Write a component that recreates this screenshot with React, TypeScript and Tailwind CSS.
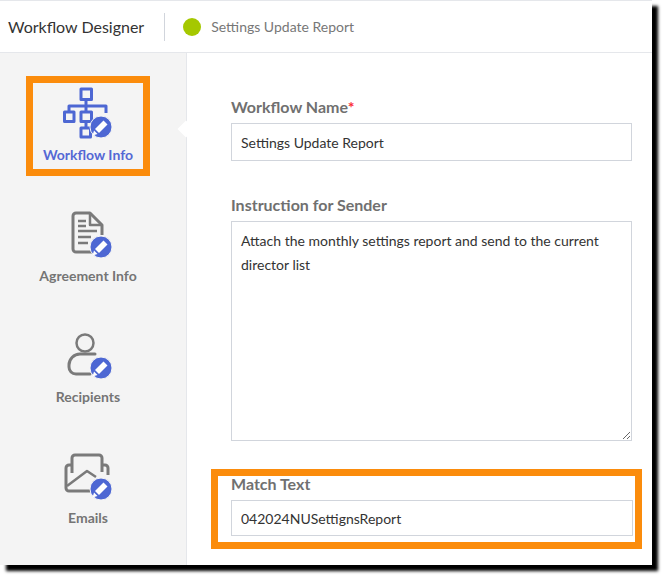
import type { ReactNode } from 'react';

const font = { fontFamily: 'Lato, "Noto Sans", sans-serif' };

function Badge() {
  return (
    <g>
      <circle cx="38" cy="40" r="11" fill="#4d67d3" stroke="#f4f4f4" strokeWidth="1" />
      <path d="M40.5 33.5l4 4-8.5 8.5-4-4z" fill="#fff" />
      <path d="M31 43.5l3.5 3.5-5 1.5z" fill="#fff" />
    </g>
  );
}

function IconFrame({ children }: { children: ReactNode }) {
  return (
    <svg width="50" height="52" viewBox="0 0 50 52" fill="none" strokeWidth="2.5" strokeLinejoin="round">
      {children}
      <Badge />
    </svg>
  );
}

function WorkflowIcon() {
  return (
    <IconFrame>
      <g stroke="#4d67d3" strokeWidth="3">
        <rect x="18" y="2" width="10.5" height="10.5" />
        <rect x="1.5" y="25" width="9.5" height="9.5" />
        <rect x="18" y="25" width="10.5" height="9.5" />
        <rect x="18" y="41" width="9.5" height="9" />
        <path d="M23 12.5V25M6 25v-6h37v7M23 34.5V41" />
      </g>
    </IconFrame>
  );
}

function AgreementIcon() {
  return (
    <IconFrame>
      <g stroke="#7a7a7a">
        <path d="M30 45H13a3 3 0 0 1-3-3V9a3 3 0 0 1 3-3h14l12 12v10" strokeWidth="3" />
        <path d="M27 6v12h12" />
        <path d="M15 14h8M15 19h8M15 24h19M15 30h13M15 36h10" />
      </g>
    </IconFrame>
  );
}

function RecipientsIcon() {
  return (
    <IconFrame>
      <g stroke="#7a7a7a">
        <circle cx="22" cy="15" r="8.5" />
        <path d="M32 26H17c-6 0-11 5-11 11v2c0 4 3 7 7 7h14" strokeWidth="3" strokeLinecap="round" />
      </g>
    </IconFrame>
  );
}

function EmailsIcon() {
  return (
    <IconFrame>
      <g stroke="#7a7a7a">
        <path d="M9 24V9a3 3 0 0 1 3-3h24a3 3 0 0 1 3 3v14" strokeWidth="3" />
        <path d="M9 16H6a3 3 0 0 0-3 3v20a3 3 0 0 0 3 3h21M39 16h3a3 3 0 0 1 3 3v7" strokeWidth="3" />
        <path d="M4 37l20-15 9 6" />
      </g>
    </IconFrame>
  );
}

function NavItem({ icon, label, active }: { icon: ReactNode; label: string; active?: boolean }) {
  return (
    <div
      className={`flex h-25 w-31 flex-col items-center text-sm font-bold ${
        active ? 'border-[7px] border-[#fb8c0c] pt-1 text-[#5468d4]' : 'pt-2.5 text-[#757575]'
      }`}
    >
      {icon}
      <span className={active ? 'mt-1.5' : 'mt-1.75'}>{label}</span>
    </div>
  );
}

export default function App() {
  return (
    <div className="h-[577px] w-[663px] overflow-hidden bg-white">
      <div style={font} className="flex h-[565px] w-[652px] flex-col border-t border-gray-200 bg-white shadow-[6px_6px_3px_#000]">
        {/* Header */}
        <div className="flex h-13 items-center border-b border-gray-200">
          <h1 className="pl-2 text-base text-[#333]">Workflow Designer</h1>
          <div className="mr-4.5 ml-5 h-7 w-px bg-gray-300" />
          <span className="h-4.5 w-4.5 rounded-full bg-[#a5c800]" />
          <span className="ml-2.5 text-sm text-[#777]">Settings Update Report</span>
        </div>

        <div className="flex min-h-0 flex-1">
          {/* Sidebar */}
          <aside className="relative flex w-46.75 flex-col items-center gap-5.25 border-r border-gray-200 bg-[#f4f4f4] pt-5.75 pr-2.5">
            <NavItem icon={<WorkflowIcon />} label="Workflow Info" active />
            <NavItem icon={<AgreementIcon />} label="Agreement Info" />
            <NavItem icon={<RecipientsIcon />} label="Recipients" />
            <NavItem icon={<EmailsIcon />} label="Emails" />
            <span className="absolute top-17.5 -right-1.5 h-3 w-3 rotate-45 bg-white" />
          </aside>

          {/* Form */}
          <main className="flex-1 pt-10.5 pr-5 pl-6 text-sm text-[#333]">
            <div className="pl-5">
              <label className="mb-1 block text-base font-bold text-[#707070]">
                Workflow Name<span className="text-red-500">*</span>
              </label>
              <input
                readOnly
                value="Settings Update Report"
                className="h-9.5 w-full border border-gray-300 px-2.25 outline-none"
              />
              <label className="mt-8 mb-1 block text-base font-bold text-[#707070]">Instruction for Sender</label>
              <textarea
                readOnly
                defaultValue="Attach the monthly settings report and send to the current director list"
                className="block h-55 w-full border border-gray-300 px-2.25 py-1.75 leading-6 outline-none"
              />
            </div>
            <div className="mt-7 -mr-2.5 border-[7px] border-[#fb8c0c] pr-0.5 pb-1.5 pl-3.25">
              <label className="-mt-1 mb-1 block text-base font-bold text-[#707070]">Match Text</label>
              <input
                readOnly
                value="042024NUSettignsReport"
                className="h-9 w-full border border-gray-300 px-2.25 outline-none"
              />
            </div>
          </main>
        </div>
      </div>
    </div>
  );
}
